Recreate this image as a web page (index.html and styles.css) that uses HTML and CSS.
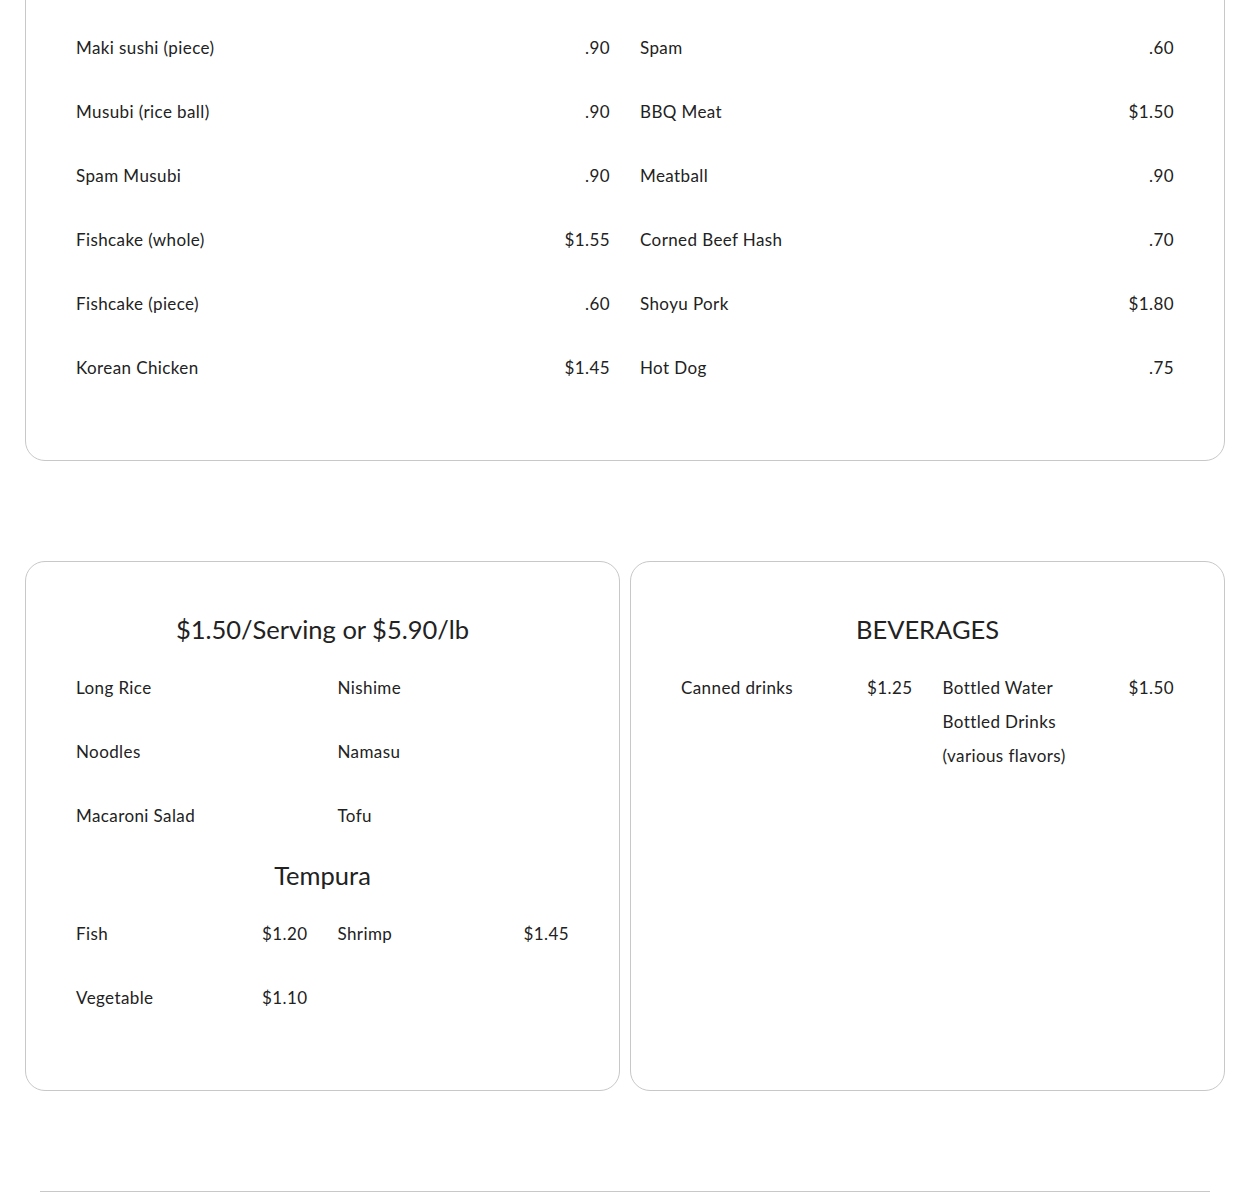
FILE: index.html
```html
<!DOCTYPE html>
<html lang="en">
<head>
<meta charset="utf-8">
<title>Menu</title>
<link rel="stylesheet" href="styles.css">
</head>
<body>
<main class="page">
  <section class="card card-wide">
    <div class="grid">
      <div class="item"><span class="name">Maki sushi (piece)</span><span class="price">.90</span></div>
      <div class="item"><span class="name">Spam</span><span class="price">.60</span></div>
      <div class="item"><span class="name">Musubi (rice ball)</span><span class="price">.90</span></div>
      <div class="item"><span class="name">BBQ Meat</span><span class="price">$1.50</span></div>
      <div class="item"><span class="name">Spam Musubi</span><span class="price">.90</span></div>
      <div class="item"><span class="name">Meatball</span><span class="price">.90</span></div>
      <div class="item"><span class="name">Fishcake (whole)</span><span class="price">$1.55</span></div>
      <div class="item"><span class="name">Corned Beef Hash</span><span class="price">.70</span></div>
      <div class="item"><span class="name">Fishcake (piece)</span><span class="price">.60</span></div>
      <div class="item"><span class="name">Shoyu Pork</span><span class="price">$1.80</span></div>
      <div class="item"><span class="name">Korean Chicken</span><span class="price">$1.45</span></div>
      <div class="item"><span class="name">Hot Dog</span><span class="price">.75</span></div>
    </div>
  </section>

  <div class="pair">
    <section class="card">
      <h2 class="heading">$1.50/Serving or $5.90/lb</h2>
      <div class="grid">
        <div class="item"><span class="name">Long Rice</span></div>
        <div class="item"><span class="name">Nishime</span></div>
        <div class="item"><span class="name">Noodles</span></div>
        <div class="item"><span class="name">Namasu</span></div>
        <div class="item"><span class="name">Macaroni Salad</span></div>
        <div class="item"><span class="name">Tofu</span></div>
      </div>
      <h2 class="heading">Tempura</h2>
      <div class="grid">
        <div class="item"><span class="name">Fish</span><span class="price">$1.20</span></div>
        <div class="item"><span class="name">Shrimp</span><span class="price">$1.45</span></div>
        <div class="item"><span class="name">Vegetable</span><span class="price">$1.10</span></div>
      </div>
    </section>
    <section class="card">
      <h2 class="heading">BEVERAGES</h2>
      <div class="grid">
        <div class="item"><span class="name">Canned drinks</span><span class="price">$1.25</span></div>
        <div class="item"><span class="name">Bottled Water<br>Bottled Drinks<br>(various flavors)</span><span class="price">$1.50</span></div>
      </div>
    </section>
  </div>

  <div class="footer-rule"></div>
</main>
</body>
</html>
```
FILE: styles.css
```css
* { box-sizing: border-box; }
html, body { margin: 0; padding: 0; background: #fff; }
body {
  font-family: "Lato", "Open Sans", sans-serif;
  font-size: 17px;
  color: #222;
}
.page {
  width: 1200px;
  margin: -45px auto 0;
}
.card {
  border: 1px solid #c8c8c8;
  border-radius: 20px;
  padding: 40px 50px 60px;
  background: #fff;
}
.card-wide { padding-top: 60px; }
.grid {
  display: grid;
  grid-template-columns: 1fr 1fr;
  column-gap: 30px;
}
.item {
  display: flex;
  justify-content: space-between;
  align-items: flex-start;
  padding: 15px 0;
  line-height: 34px;
  letter-spacing: 0.4px;
}
.price { text-align: right; }
.pair {
  margin-top: 100px;
  display: grid;
  grid-template-columns: 1fr 1fr;
  column-gap: 10px;
}
.heading {
  margin: 9px 0 9px;
  font-size: 25.5px;
  font-weight: 400;
  line-height: 36px;
  text-align: center;
  color: #222;
}
.footer-rule {
  width: 1170px;
  margin: 100px auto 0;
  border-top: 1px solid #c8c8c8;
  height: 20px;
}
```
